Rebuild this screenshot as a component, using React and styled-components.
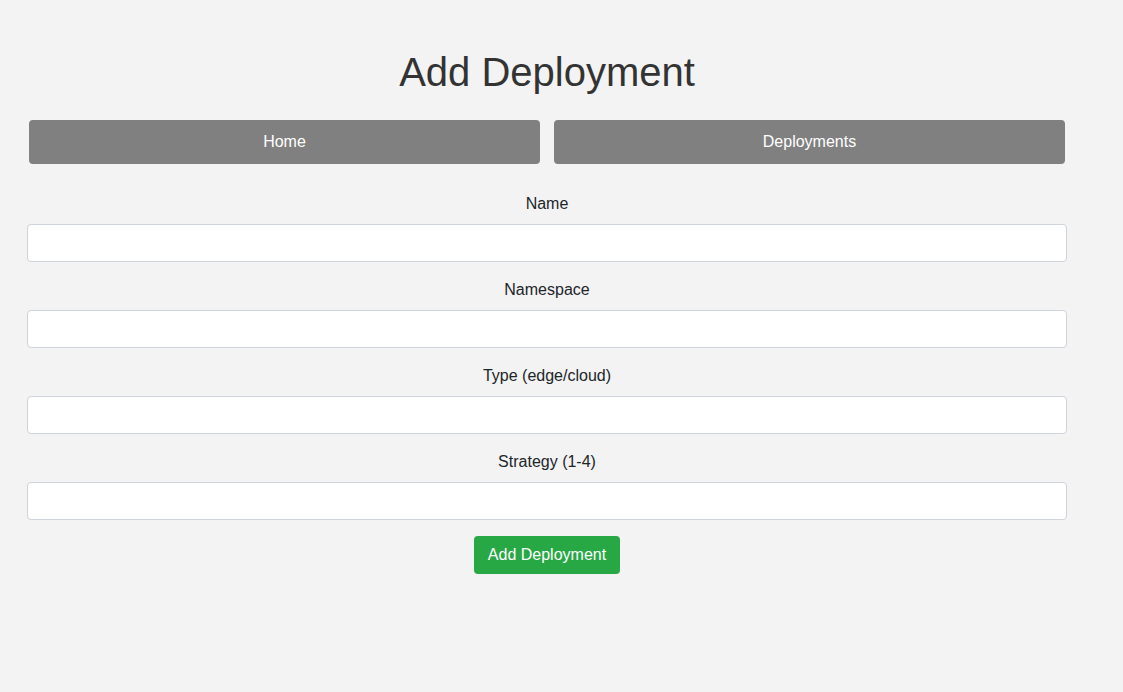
import React from "react";
import styled, { createGlobalStyle } from "styled-components";

const Global = createGlobalStyle`
  html, body { margin: 0; padding: 0; background: #f3f3f3; }
  body { font-family: "Liberation Sans", Arial, Helvetica, sans-serif; color: #212529; }
  * { box-sizing: border-box; }
`;

const Page = styled.div`
  width: 1040px;
  margin-left: 27px;
  padding-top: 49px;
`;

const Title = styled.h1`
  margin: 0;
  text-align: center;
  font-size: 40px;
  font-weight: 400;
  line-height: 46px;
  color: #333;
`;

const Nav = styled.nav`
  display: flex;
  gap: 14px;
  padding: 0 2px;
  margin-top: 25px;
`;

const NavButton = styled.button`
  flex: 1;
  height: 44px;
  border: none;
  border-radius: 4px;
  background: #808080;
  color: #fff;
  font-family: inherit;
  font-size: 16px;
  cursor: pointer;
`;

const Form = styled.form`
  display: flex;
  flex-direction: column;
  margin-top: 27px;
`;

const Group = styled.div`
  display: flex;
  flex-direction: column;
  margin-bottom: 15px;
  &:last-of-type { margin-bottom: 16px; }
`;

const Label = styled.label`
  display: block;
  text-align: center;
  font-size: 16px;
  line-height: 24px;
  padding-top: 1px;
  margin-bottom: 8px;
  color: #212529;
`;

const Input = styled.input`
  width: 100%;
  height: 38px;
  padding: 6px 12px;
  font-size: 16px;
  line-height: 24px;
  font-family: inherit;
  border: 1px solid #ced4da;
  border-radius: 4px;
  background: #fff;
  color: #495057;
  outline: none;
`;

const Submit = styled.button`
  align-self: center;
  height: 38px;
  padding: 6px 13.5px;
  border: none;
  border-radius: 4px;
  background: #28a745;
  color: #fff;
  font-family: inherit;
  font-size: 16px;
  line-height: 24px;
  cursor: pointer;
`;

const fields = ["Name", "Namespace", "Type (edge/cloud)", "Strategy (1-4)"];

export default function App() {
  return (
    <>
      <Global />
      <Page>
        <Title>Add Deployment</Title>
        <Nav>
          <NavButton type="button">Home</NavButton>
          <NavButton type="button">Deployments</NavButton>
        </Nav>
        <Form onSubmit={(e) => e.preventDefault()}>
          {fields.map((f) => (
            <Group key={f}>
              <Label>{f}</Label>
              <Input type="text" />
            </Group>
          ))}
          <Submit type="submit">Add Deployment</Submit>
        </Form>
      </Page>
    </>
  );
}
